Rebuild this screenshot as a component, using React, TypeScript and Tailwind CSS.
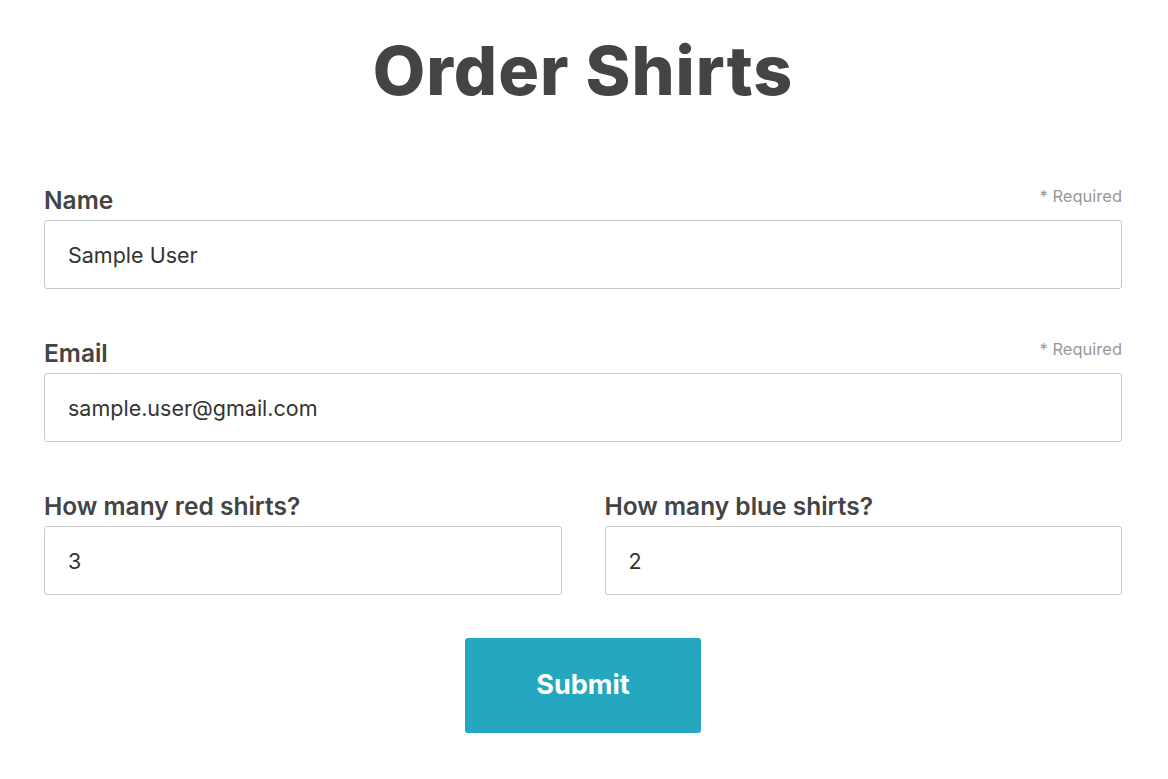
export default function App() {
  const font = { fontFamily: "Inter, 'Liberation Sans', sans-serif" };
  return (
    <div className="min-h-screen bg-white text-[#444]" style={font}>
      <div className="ml-[44px] w-[1078px] pt-[32px]">
        <h1 className="text-center text-[68px] leading-[76px] font-extrabold tracking-[1px] text-[#444]">Order Shirts</h1>

        <form className="mt-[76px] flex flex-col">
          <div className="flex items-start justify-between">
            <label className="text-[24.5px] leading-[32px] font-semibold">Name</label>
            <span className="text-[16.5px] leading-[24px] text-[#999]">* Required</span>
          </div>
          <input
            defaultValue="Sample User"
            className="mt-[4px] h-[69px] w-full rounded-[3px] border border-[#c8c8c8] px-[23px] text-[21.5px] text-[#333] outline-none"
          />

          <div className="mt-[48px] flex items-start justify-between">
            <label className="text-[24.5px] leading-[32px] font-semibold">Email</label>
            <span className="text-[16.5px] leading-[24px] text-[#999]">* Required</span>
          </div>
          <input
            defaultValue="sample.user@gmail.com"
            className="mt-[4px] h-[69px] w-full rounded-[3px] border border-[#c8c8c8] px-[23px] text-[21.5px] text-[#333] outline-none"
          />

          <div className="mt-[48px] grid grid-cols-2 gap-[43px]">
            <div className="flex flex-col">
              <label className="text-[24.5px] leading-[32px] font-semibold">How many red shirts?</label>
              <input
                defaultValue="3"
                className="mt-[4px] h-[69px] w-full rounded-[3px] border border-[#c8c8c8] px-[23px] text-[21.5px] text-[#333] outline-none"
              />
            </div>
            <div className="flex flex-col">
              <label className="text-[24.5px] leading-[32px] font-semibold">How many blue shirts?</label>
              <input
                defaultValue="2"
                className="mt-[4px] h-[69px] w-full rounded-[3px] border border-[#c8c8c8] px-[23px] text-[21.5px] text-[#333] outline-none"
              />
            </div>
          </div>

          <div className="mt-[43px] flex justify-center">
            <button
              type="button"
              className="h-[95px] w-[236px] rounded-[3px] bg-[#25a7c0] text-[27px] font-bold text-white"
            >
              Submit
            </button>
          </div>
        </form>
      </div>
    </div>
  );
}
